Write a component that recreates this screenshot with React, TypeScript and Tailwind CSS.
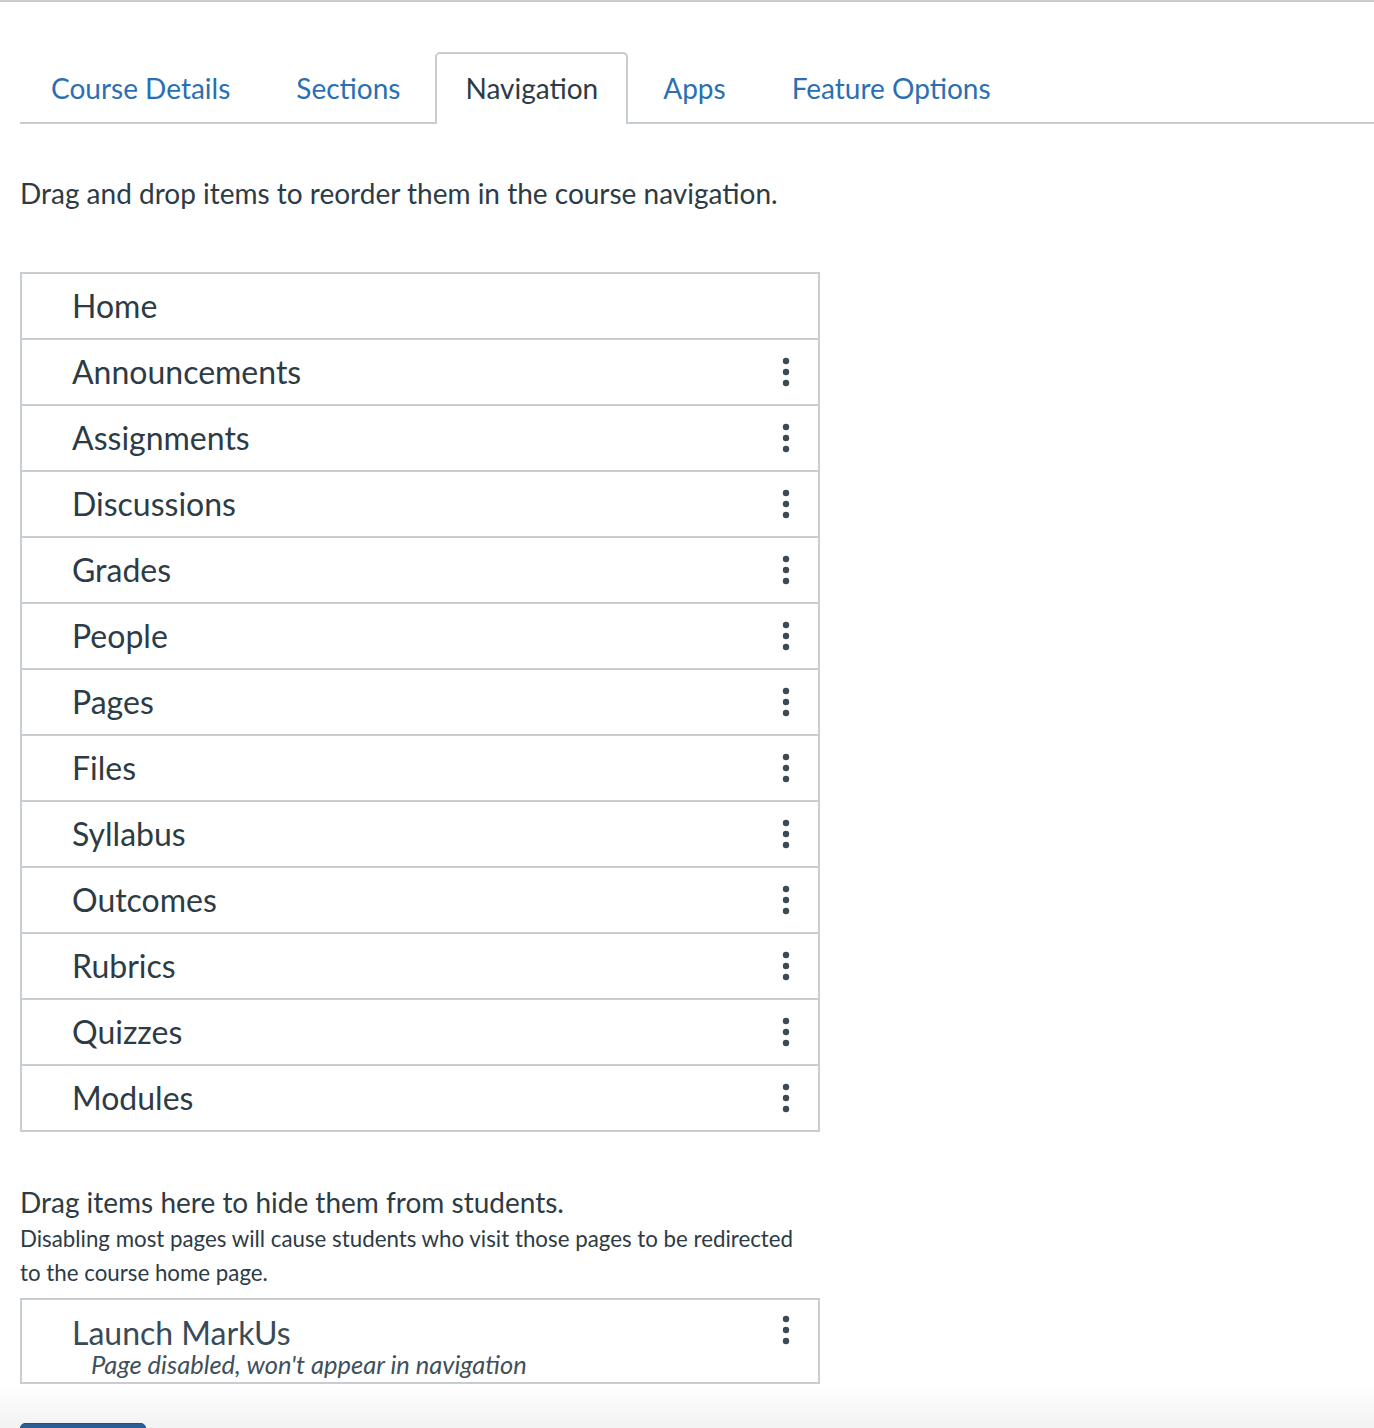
import React from "react";

const items = [
  "Home",
  "Announcements",
  "Assignments",
  "Discussions",
  "Grades",
  "People",
  "Pages",
  "Files",
  "Syllabus",
  "Outcomes",
  "Rubrics",
  "Quizzes",
  "Modules",
];

function Kebab({ className = "" }: { className?: string }) {
  return (
    <svg width="8" height="30" viewBox="0 0 8 30" className={"shrink-0 " + className}>
      <circle cx="4" cy="4" r="3.2" fill="#3b4a55" />
      <circle cx="4" cy="15" r="3.2" fill="#3b4a55" />
      <circle cx="4" cy="26" r="3.2" fill="#3b4a55" />
    </svg>
  );
}

const tabs = [
  { label: "Course Details", active: false },
  { label: "Sections", active: false },
  { label: "Navigation", active: true },
  { label: "Apps", active: false },
  { label: "Feature Options", active: false },
];

export default function App() {
  return (
    <div
      className="min-h-[1428px] w-[1374px] bg-white text-[#2d3b45] overflow-hidden relative"
      style={{ fontFamily: "Lato, 'Open Sans', sans-serif" }}
    >
      <div className="h-[2px] bg-[#c7cdd1]" />
      <div className="pl-5">
        {/* Tabs */}
        <div className="mt-[50px] flex items-end border-b-2 border-[#c7cdd1] h-[72px]">
          {tabs.map((t) =>
            t.active ? (
              <div
                key={t.label}
                className="relative -mb-[2px] mr-[4px] h-[72px] flex items-center pb-[2px] px-[28px] border-2 border-b-0 border-[#c7cdd1] rounded-t-[5px] bg-white text-[28px] text-[#2d3b45]"
              >
                {t.label}
              </div>
            ) : (
              <div
                key={t.label}
                className="h-[70px] mr-[4px] flex items-center pt-[2px] px-[31px] text-[28px] text-[#2b6fb3]"
              >
                {t.label}
              </div>
            )
          )}
        </div>

        <p className="mt-[52px] text-[28px] leading-[34px]">
          Drag and drop items to reorder them in the course navigation.
        </p>

        {/* Enabled list */}
        <div className="mt-[62px] w-[800px] border-2 border-[#c7cdd1]">
          {items.map((name, i) => (
            <div
              key={name}
              className={
                "flex items-center justify-between pl-[50px] pr-[28px] " +
                (i > 0 ? "h-[66px] border-t-2 border-[#c7cdd1]" : "h-[64px]")
              }
            >
              <span className="text-[32px] leading-none">{name}</span>
              {i > 0 && <Kebab />}
            </div>
          ))}
        </div>

        <p className="mt-[53px] text-[28px] leading-[34px]">
          Drag items here to hide them from students.
        </p>
        <p className="mt-[3px] w-[790px] text-[22.3px] leading-[34px]">
          Disabling most pages will cause students who visit those pages to be redirected to the course home page.
        </p>

        {/* Disabled list */}
        <div className="mt-[8px] w-[800px] h-[86px] border-2 border-[#c7cdd1] flex items-start justify-between pt-[16px] pl-[50px] pr-[28px]">
          <div className="flex flex-col">
            <span className="text-[32px] leading-[34px] text-[#394b58]">Launch MarkUs</span>
            <span className="-mt-[1px] pl-[19px] text-[25.5px] leading-[30px] italic text-[#3f505c]">
              Page disabled, won't appear in navigation
            </span>
          </div>
          <Kebab className="-mt-[1px]" />
        </div>
      </div>

      {/* Footer */}
      <div className="absolute left-0 right-0 top-[1386px] h-[42px] bg-gradient-to-b from-white to-[#f2f2f2]">
        <div className="absolute left-5 top-[37px] w-[126px] h-[40px] rounded-[5px] bg-[#2a5e95] border border-[#234f80]" />
      </div>
    </div>
  );
}
